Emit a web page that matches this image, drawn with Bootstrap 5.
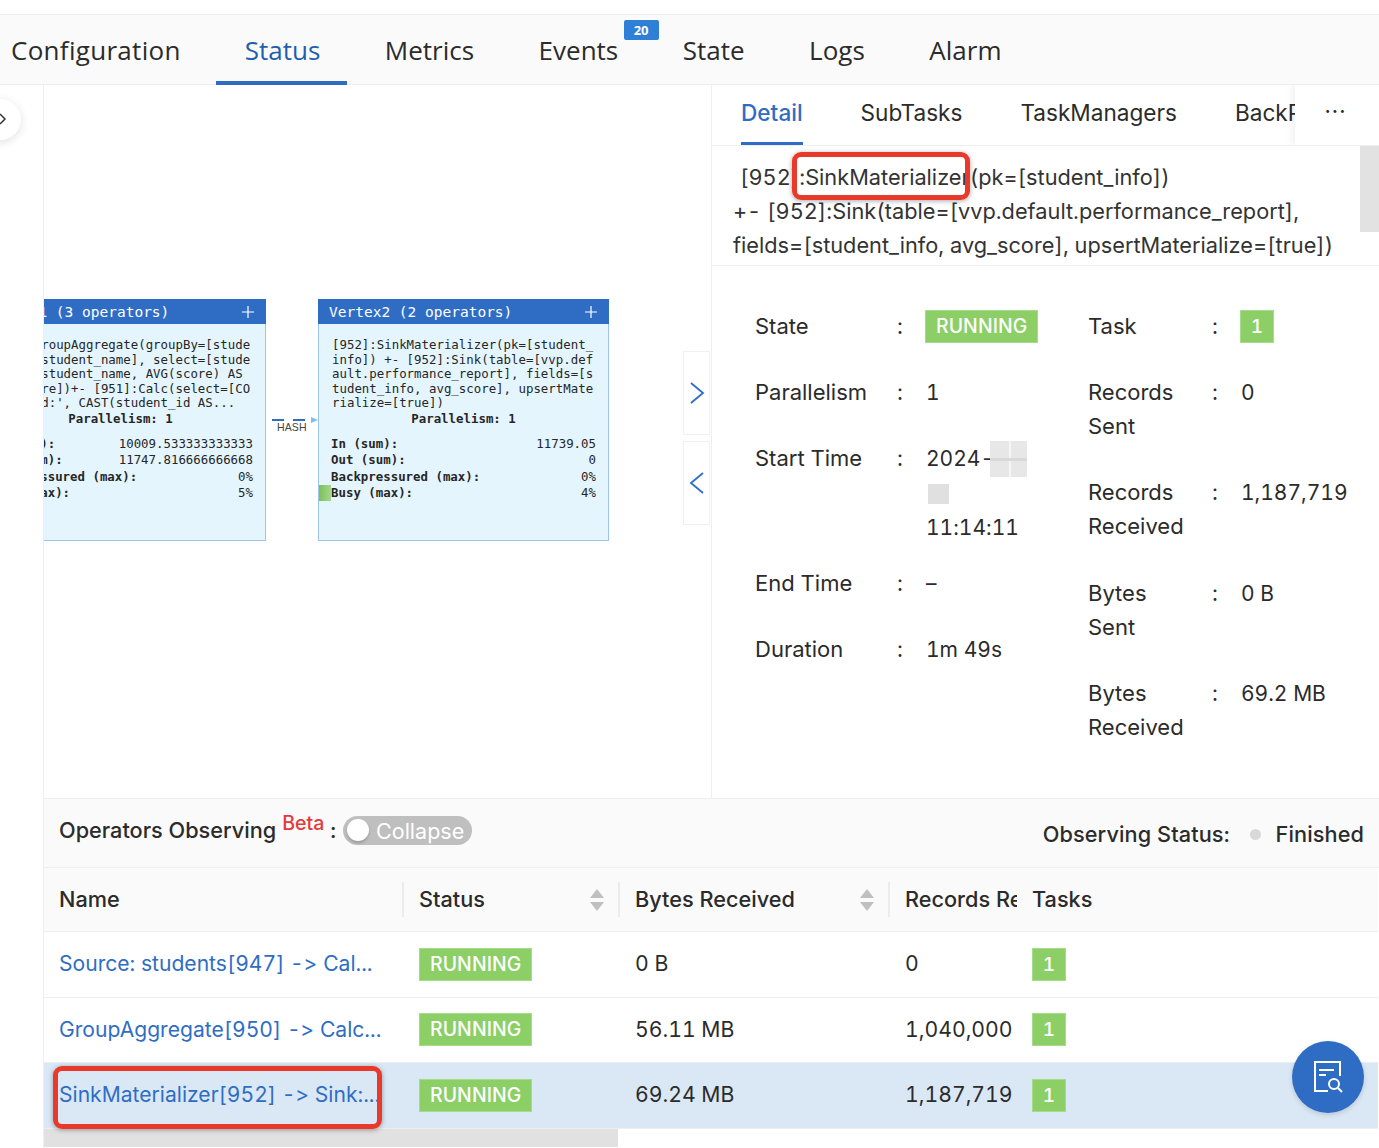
<!DOCTYPE html>
<html lang="en">
<head>
<meta charset="utf-8">
<title>Status</title>
<link href="https://cdn.jsdelivr.net/npm/bootstrap@5.3.0/dist/css/bootstrap.min.css" rel="stylesheet">
<style>
html,body{margin:0;height:1148px;overflow:hidden;background:#fff}
body{font-family:"Inter","Liberation Sans",sans-serif;color:#2b2b2b;font-size:22px;font-variant-numeric:tabular-nums;font-variant-ligatures:none;font-feature-settings:"calt" 0,"tnum" 1}
.shell{height:1148px;width:1379px;position:relative;overflow:hidden}
.topstrip{height:15px;flex:none;border-bottom:1px solid #eee;background:#fff}
.toptabs{height:70px;flex:none;background:#fafafa;border-bottom:1px solid #eee;padding-left:11px;flex-wrap:nowrap;font-family:"Open Sans","Liberation Sans",sans-serif;font-size:26px}
.toptabs .nav-link{color:#2b2b2b;padding:0 27px 0 29px;margin-right:8.5px;height:70px;line-height:71px;position:relative;white-space:nowrap}
.toptabs .nav-link:first-child{padding:0;margin-right:35px;letter-spacing:.3px}
.toptabs .nav-link.active{color:#1f5fb0;border-bottom:4px solid #2f6dc5}
.countpill{position:absolute;left:114px;top:5px;width:35px;height:20px;border-radius:2px;background:#2f7fd6;color:#fff;font:700 13px/20px "Open Sans",sans-serif;text-align:center}
.gutter{width:44px;flex:none;border-right:1px solid #eee;background:#fff}
.collapse-tip{position:absolute;left:-20px;top:99px;width:41px;height:41px;border-radius:50%;background:#fff;box-shadow:0 2px 10px rgba(0,0,0,.12)}
.collapse-tip svg{position:absolute;left:19px;top:14px}
.upper{height:713px;flex:none}
.canvas{width:668px;flex:none;position:relative;overflow:hidden;border-right:1px solid #eee;background:#fff}
.vnode{position:absolute;top:214px;width:291px;height:242px;border:1px solid #9cc3ee;background:#e4f5fe;font-family:"DejaVu Sans Mono",monospace;font-size:12.4px;color:#262626}
.vhead{height:25px;margin:-1px -1px 0;background:#2f6dc5;color:#fff;font-size:14.5px;line-height:27px;padding-left:11px;position:relative;white-space:pre}
.vhead svg{position:absolute;right:11px;top:6px}
.vdesc{line-height:14.5px;padding:14px 0 0 13px;margin:0;white-space:pre}
.vpar{font-weight:700;line-height:16px;text-align:center;padding-top:0}
.vstats{padding:9px 12px 0 12px;line-height:16.6px}
.vstats b{font-weight:700}
.vbusy{position:absolute;left:0;top:185px;width:12px;height:16px;background:linear-gradient(90deg,#7dc05a,#a4d68a)}
.edge{position:absolute;left:228px;top:330px;width:46px;height:20px;color:#444;font:10.5px/12px "Liberation Sans",sans-serif}
.edge i{position:absolute;top:4px;height:2px;width:12px;background:#2f6dc5}
.edge span{position:absolute;left:5px;top:6px;letter-spacing:.1px}
.edge em{position:absolute;left:39px;top:2px;border-left:7px solid #7cc0f0;border-top:3px solid transparent;border-bottom:3px solid transparent}
.pager{position:absolute;left:639px;width:27px;height:84px;border:1px solid #f0f0f0;background:#fff;display:flex;align-items:center;justify-content:center}
.detail{flex:1;min-width:0;position:relative;background:#fff}
.dtabs{height:61px;border-bottom:1px solid #eee;padding-left:29px;flex-wrap:nowrap;overflow:hidden;font-size:22.6px;position:relative}
.dtabs .nav-link{color:#2b2b2b;padding:0;margin-right:58px;height:60px;line-height:56px;white-space:nowrap}
.dtabs .nav-link.active{color:#2f6dc5;font-weight:500;border-bottom:3px solid #2f6dc5}
.moretab{position:absolute;right:0;top:0;width:84px;height:60px;background:#fff;box-shadow:-4px 0 6px rgba(0,0,0,.05);text-align:center;line-height:52px;letter-spacing:1px;font-size:22px;padding-right:3px}
.opdesc{height:120px;border-bottom:1px solid #eee;padding:14px 30px 0 21px;font-size:21.75px;line-height:34px;position:relative;margin:0;white-space:pre-line;color:#333}
.opdesc span{padding-left:7px}
.thumb{position:absolute;right:0;top:0;width:19px;height:86px;background:#e2e2e2}
.facts{padding-top:43px}
.factcol{position:relative}
.factcol.cl{width:376px;padding-left:43px;flex:none}
.factcol.cr{flex:1}
.fact{display:grid;margin-bottom:32px;line-height:34px;font-size:22px}
.fact>div:last-child{font-size:21px;padding-top:1px;margin-bottom:-1px}
.cl .fact{grid-template-columns:142px 29px 1fr}
.cr .fact{grid-template-columns:124px 29px 1fr}
.fact.tight{margin-bottom:22px}
.fact.wide{margin-bottom:32.5px}
.ok-tag{display:inline-block;background:#8ccf67;border:1px solid #a6dc88;color:#fff;border-radius:0;font-weight:500;line-height:31px;height:33px;padding:0 10px;font-size:19.4px;vertical-align:top;letter-spacing:.1px}
.ok-tag.one{width:34px;padding:0;text-align:center;font-size:19px}
.fact .ok-tag{margin:0 0 0 -1px}
.smudge{display:inline-block;vertical-align:top}
.s1{width:37px;height:36px;margin:-1px 0 0 -4px;background:linear-gradient(#d9d9d9,#d9d9d9) 0 17px/100% 3px no-repeat,linear-gradient(#f6f6f6,#f6f6f6) 19px 0/2px 100% no-repeat,#e7e7e7}
.s2{width:21px;height:20px;background:#e0e0e0;margin-top:7px;margin-left:2px}
.lower{flex:1;border-top:1px solid #eee;min-height:0;position:relative}
.lowhead{height:69px;background:#fafafa;border-bottom:1px solid #eee;padding:0 15px 6px;font-size:21.7px}
.betatag{color:#e5383b;font-size:19.5px;font-weight:500;position:relative;top:-6px;margin:0 6px}
.switcher{width:129px;height:29px;border-radius:15px;background:#bfbfbf;color:#fff;margin-left:7px;position:relative;padding-left:33px;line-height:30px;font-size:21.5px;margin-top:2px}
.switcher::before{content:"";position:absolute;left:4px;top:3px;width:22px;height:22px;border-radius:50%;background:#fff;box-shadow:0 2px 3px rgba(0,0,0,.2)}
.greydot{width:11px;height:11px;border-radius:50%;background:#d9d9d9;margin:0 15px 0 20px}
.obstat{margin-top:9px;letter-spacing:.1px}
.optable{table-layout:fixed;width:1334px;margin:0;font-size:21.2px;--bs-table-color:#2b2b2b;--bs-table-border-color:#eee}
.optable th,.optable td{padding:0 0 0 15px;vertical-align:middle;white-space:nowrap;overflow:hidden;position:relative}
.optable th{height:63px;background:#fafafa;font-weight:500;font-size:21.7px;--bs-table-bg:#fafafa}
.optable td{height:66px}
.optable tr:nth-child(2) td{height:65px}
.optable tr.picked td{--bs-table-bg:#dae8f6;background:#dae8f6}
.optable a{color:#2f6dc5;text-decoration:none;font-size:21.1px}
.hsep::after{content:"";position:absolute;right:0;top:14px;height:35px;width:2px;background:#ececec}
.sorter{position:absolute;right:16px;top:20px}
.pinned{overflow:visible!important;box-shadow:-6px 0 7px -3px rgba(0,0,0,.13);z-index:2}
.optable .pinned{background:#fff}
.optable th.pinned{background:#fafafa}
.optable tr.picked td.pinned{background:#dae8f6}
.hscroll{height:18px;width:574px;background:#e1e1e1}
.fab{position:absolute;left:1292px;top:1041px;width:72px;height:72px;border-radius:50%;background:#2f6dc5;box-shadow:0 2px 5px rgba(0,0,0,.15);display:flex;align-items:center;justify-content:center;z-index:5}
.callout{position:absolute;border:5px solid #e8392b;border-radius:9px;box-shadow:0 1px 5px rgba(0,0,0,.35);z-index:4;pointer-events:none}
.c1{left:792px;top:152px;width:178px;height:48px}
.c2{left:53px;top:1066px;width:329px;height:63px}
</style>
</head>
<body>
<div class="shell d-flex flex-column">
  <div class="topstrip"></div>
  <nav class="nav toptabs">
    <a class="nav-link" href="#">Configuration</a>
    <a class="nav-link active" href="#">Status</a>
    <a class="nav-link" href="#">Metrics</a>
    <a class="nav-link" href="#">Events<span class="countpill">20</span></a>
    <a class="nav-link" href="#">State</a>
    <a class="nav-link" href="#">Logs</a>
    <a class="nav-link" href="#">Alarm</a>
  </nav>
  <div class="d-flex flex-grow-1" style="min-height:0">
    <aside class="gutter"></aside>
    <main class="flex-grow-1 d-flex flex-column" style="min-width:0">
      <div class="d-flex upper">
        <div class="canvas">
          <div class="vnode" style="left:-69px">
            <div class="vhead">Vertex1 (3 operators)<svg width="14" height="14" viewBox="0 0 14 14"><path d="M7 1v12M1 7h12" stroke="#fff" stroke-width="1.2"/></svg></div>
            <div class="vdesc">[950]:GroupAggregate(groupBy=[stude
nt_id, student_name], select=[stude
nt_id, student_name, AVG(score) AS
avg_score])+- [951]:Calc(select=[CO
NCAT('id:', CAST(student_id AS...</div>
            <div class="vpar">Parallelism: 1</div>
            <div class="vstats">
              <div class="d-flex justify-content-between"><b>In (sum):</b><span>10009.533333333333</span></div>
              <div class="d-flex justify-content-between"><b>Out (sum):</b><span>11747.816666666668</span></div>
              <div class="d-flex justify-content-between"><b>Backpressured (max):</b><span>0%</span></div>
              <div class="d-flex justify-content-between"><b>Busy (max):</b><span>5%</span></div>
            </div>
            <div class="vbusy"></div>
          </div>
          <div class="edge"><i style="left:0"></i><i style="left:21px"></i><em></em><span>HASH</span></div>
          <div class="vnode" style="left:274px">
            <div class="vhead">Vertex2 (2 operators)<svg width="14" height="14" viewBox="0 0 14 14"><path d="M7 1v12M1 7h12" stroke="#fff" stroke-width="1.2"/></svg></div>
            <div class="vdesc">[952]:SinkMaterializer(pk=[student_
info]) +- [952]:Sink(table=[vvp.def
ault.performance_report], fields=[s
tudent_info, avg_score], upsertMate
rialize=[true])</div>
            <div class="vpar">Parallelism: 1</div>
            <div class="vstats">
              <div class="d-flex justify-content-between"><b>In (sum):</b><span>11739.05</span></div>
              <div class="d-flex justify-content-between"><b>Out (sum):</b><span>0</span></div>
              <div class="d-flex justify-content-between"><b>Backpressured (max):</b><span>0%</span></div>
              <div class="d-flex justify-content-between"><b>Busy (max):</b><span>4%</span></div>
            </div>
            <div class="vbusy"></div>
          </div>
          <div class="pager" style="top:266px"><svg width="16" height="24" viewBox="0 0 16 24"><path d="M2 2l12 10L2 22" fill="none" stroke="#2f6dc5" stroke-width="1.8"/></svg></div>
          <div class="pager" style="top:356px"><svg width="16" height="24" viewBox="0 0 16 24"><path d="M14 2L2 12l12 10" fill="none" stroke="#2f6dc5" stroke-width="1.8"/></svg></div>
        </div>
        <div class="detail d-flex flex-column">
          <nav class="nav dtabs">
            <a class="nav-link active" href="#">Detail</a>
            <a class="nav-link" href="#">SubTasks</a>
            <a class="nav-link" href="#">TaskManagers</a>
            <a class="nav-link" href="#">BackPressure</a>
            <div class="moretab">···</div>
          </nav>
          <p class="opdesc"><span>[952]:SinkMaterializer(pk=[student_info])</span>
+- [952]:Sink(table=[vvp.default.performance_report],
fields=[student_info, avg_score], upsertMaterialize=[true])<i class="thumb"></i></p>
          <div class="d-flex facts">
            <div class="factcol cl">
              <div class="fact"><div>State</div><div>:</div><div><span class="badge ok-tag">RUNNING</span></div></div>
              <div class="fact"><div>Parallelism</div><div>:</div><div>1</div></div>
              <div class="fact tight"><div>Start Time</div><div>:</div><div>2024-<span class="smudge s1"></span><br><span class="smudge s2"></span><br>11:14:11</div></div>
              <div class="fact"><div>End Time</div><div>:</div><div>–</div></div>
              <div class="fact"><div>Duration</div><div>:</div><div>1m 49s</div></div>
            </div>
            <div class="factcol cr">
              <div class="fact"><div>Task</div><div>:</div><div><span class="badge ok-tag one">1</span></div></div>
              <div class="fact"><div>Records<br>Sent</div><div>:</div><div>0</div></div>
              <div class="fact wide"><div>Records<br>Received</div><div>:</div><div>1,187,719</div></div>
              <div class="fact"><div>Bytes<br>Sent</div><div>:</div><div>0 B</div></div>
              <div class="fact"><div>Bytes<br>Received</div><div>:</div><div>69.2 MB</div></div>
            </div>
          </div>
        </div>
      </div>
      <section class="lower">
        <div class="lowhead d-flex align-items-center justify-content-between">
          <div class="d-flex align-items-center"><span class="fw-medium">Operators Observing</span><span class="betatag">Beta</span><span class="fw-medium">:</span><span class="switcher">Collapse</span></div>
          <div class="d-flex align-items-center fw-medium obstat">Observing Status:<span class="greydot"></span>Finished</div>
        </div>
        <table class="table optable">
          <colgroup><col style="width:360px"><col style="width:216px"><col style="width:270px"><col style="width:127px"><col style="width:361px"></colgroup>
          <thead><tr>
            <th class="hsep">Name</th>
            <th class="hsep">Status<svg class="sorter" width="14" height="24" viewBox="0 0 14 24"><path d="M7 1l7 9H0zM7 23L0 14h14z" fill="#bfbfbf"/></svg></th>
            <th class="hsep">Bytes Received<svg class="sorter" width="14" height="24" viewBox="0 0 14 24"><path d="M7 1l7 9H0zM7 23L0 14h14z" fill="#bfbfbf"/></svg></th>
            <th>Records Received</th>
            <th class="pinned">Tasks</th>
          </tr></thead>
          <tbody>
            <tr><td><a href="#">Source: students[947] -&gt; Cal...</a></td><td><span class="badge ok-tag">RUNNING</span></td><td>0 B</td><td>0</td><td class="pinned"><span class="badge ok-tag one">1</span></td></tr>
            <tr><td><a href="#">GroupAggregate[950] -&gt; Calc...</a></td><td><span class="badge ok-tag">RUNNING</span></td><td>56.11 MB</td><td>1,040,000</td><td class="pinned"><span class="badge ok-tag one">1</span></td></tr>
            <tr class="picked"><td><a href="#">SinkMaterializer[952] -&gt; Sink:...</a></td><td><span class="badge ok-tag">RUNNING</span></td><td>69.24 MB</td><td>1,187,719</td><td class="pinned"><span class="badge ok-tag one">1</span></td></tr>
          </tbody>
        </table>
        <div class="hscroll"></div>
      </section>
    </main>
  </div>
  <div class="collapse-tip"><svg width="8" height="12" viewBox="0 0 8 12"><path d="M1 1l5 5-5 5" fill="none" stroke="#333" stroke-width="1.5"/></svg></div>
  <div class="callout c1"></div>
  <div class="callout c2"></div>
  <div class="fab"><svg width="32" height="34" viewBox="0 0 32 34" fill="none" stroke="#fff" stroke-width="2"><path d="M28 16V2H3v29h13"/><path d="M7 10h15M7 15h7"/><circle cx="22" cy="24" r="5"/><path d="M26 28l4 4"/></svg></div>
</div>
<script src="https://cdn.jsdelivr.net/npm/bootstrap@5.3.0/dist/js/bootstrap.bundle.min.js"></script>
</body>
</html>
